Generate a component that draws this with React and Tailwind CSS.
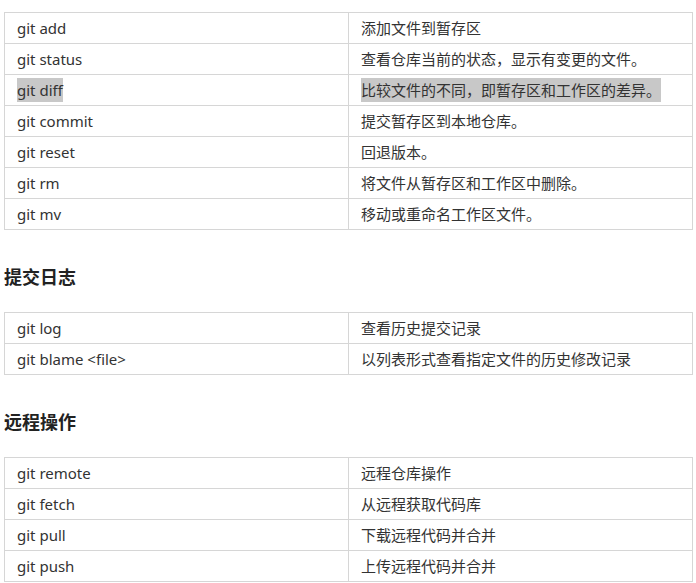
const sections = [
  {
    title: null,
    rows: [
      ["git add", "添加文件到暂存区"],
      ["git status", "查看仓库当前的状态，显示有变更的文件。"],
      ["git diff", "比较文件的不同，即暂存区和工作区的差异。", true],
      ["git commit", "提交暂存区到本地仓库。"],
      ["git reset", "回退版本。"],
      ["git rm", "将文件从暂存区和工作区中删除。"],
      ["git mv", "移动或重命名工作区文件。"],
    ],
  },
  {
    title: "提交日志",
    rows: [
      ["git log", "查看历史提交记录"],
      ["git blame <file>", "以列表形式查看指定文件的历史修改记录"],
    ],
  },
  {
    title: "远程操作",
    rows: [
      ["git remote", "远程仓库操作"],
      ["git fetch", "从远程获取代码库"],
      ["git pull", "下载远程代码并合并"],
      ["git push", "上传远程代码并合并"],
    ],
  },
];

function Cell({ children, marked }) {
  return (
    <td className="border border-[#d6d6d6] h-[31px] px-3 py-0 align-middle">
      {marked ? <span className="bg-[#c8c8c8] py-[2px]">{children}</span> : children}
    </td>
  );
}

function App() {
  return (
    <div
      className="min-h-screen bg-white text-[#333] pt-3 pl-1 pr-[3px] text-[15px]"
      style={{ fontFamily: '"Noto Sans", "Noto Sans CJK SC", sans-serif' }}
    >
      {sections.map((s, i) => (
        <div key={i}>
          {s.title && (
            <h3 className="mt-[33px] mb-[21px] text-[18px] leading-[28px] font-bold text-[#222]">
              {s.title}
            </h3>
          )}
          <table className="w-full border-collapse table-fixed">
            <tbody>
              {s.rows.map(([cmd, desc, marked]) => (
                <tr key={cmd}>
                  <Cell marked={marked}>{cmd}</Cell>
                  <Cell marked={marked}>{desc}</Cell>
                </tr>
              ))}
            </tbody>
          </table>
        </div>
      ))}
    </div>
  );
}

export default App;
